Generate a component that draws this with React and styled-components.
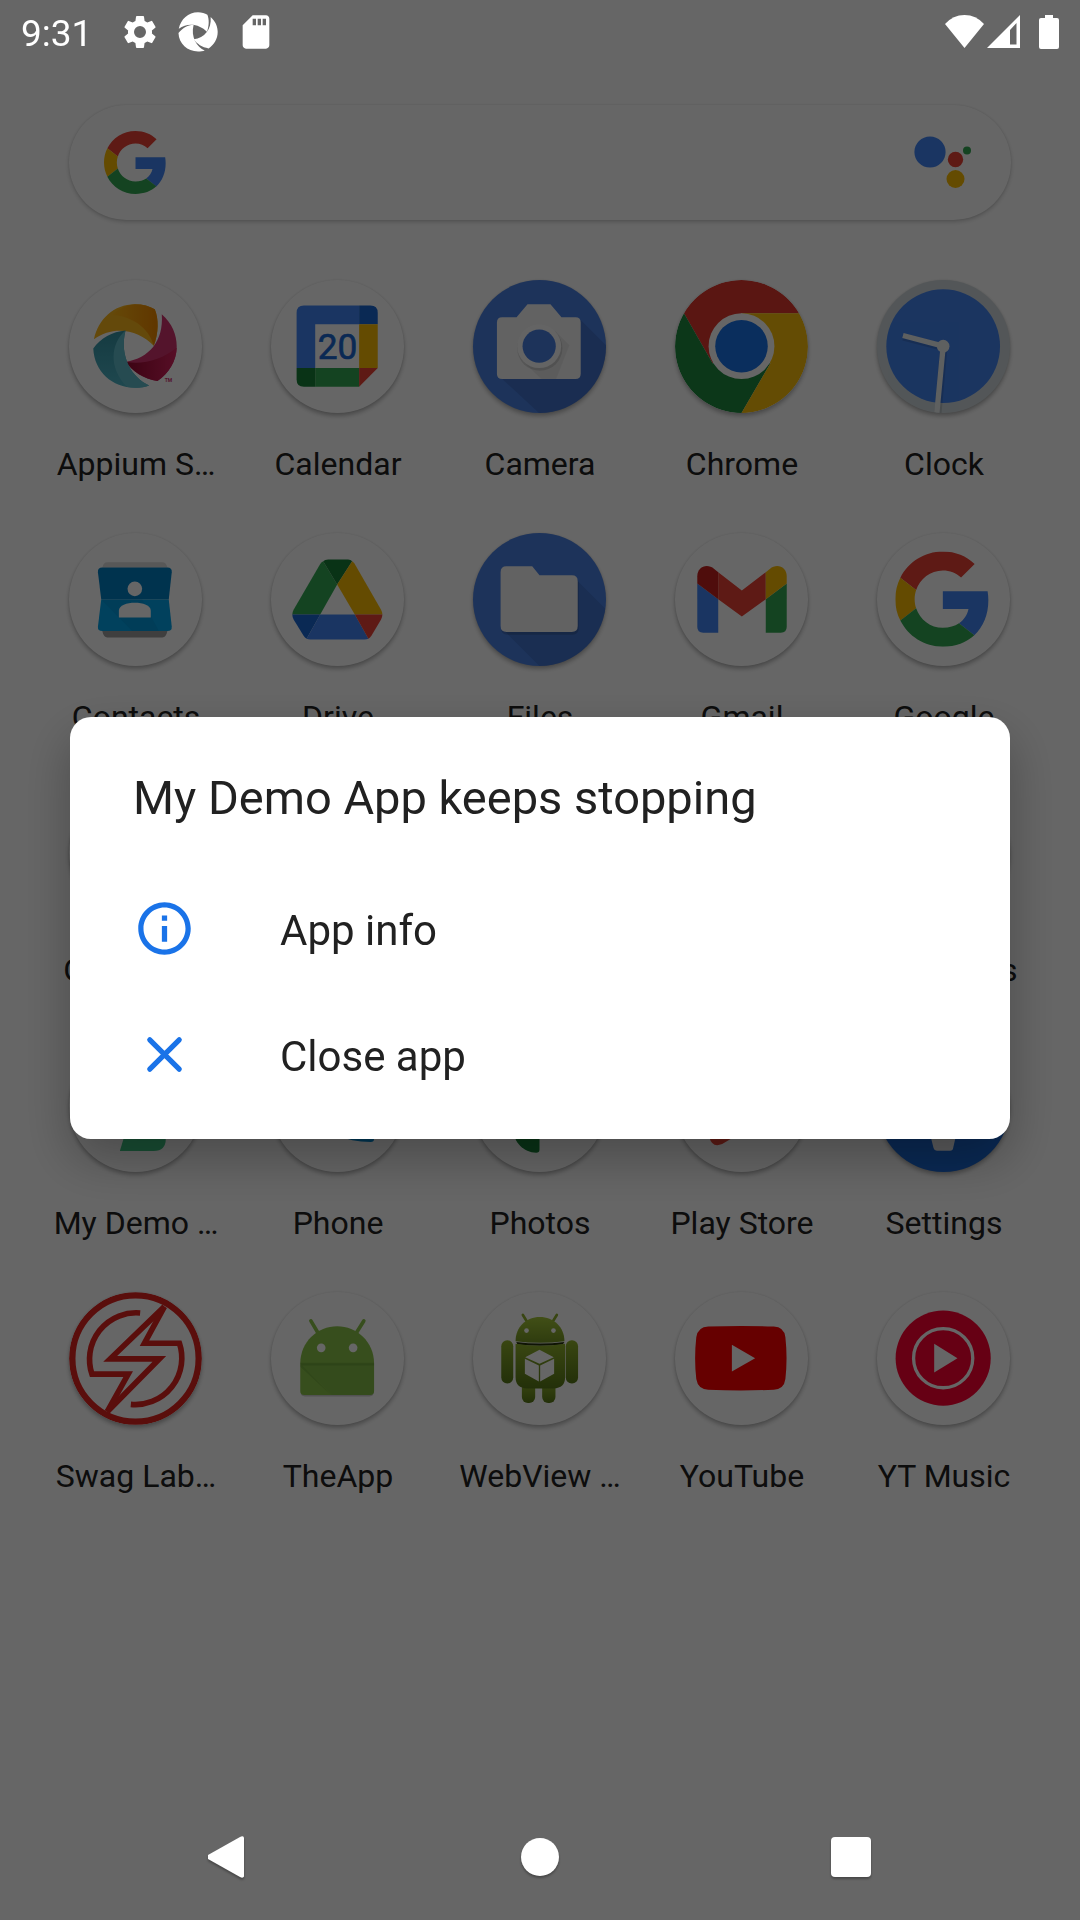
import React from "react";
import styled, { createGlobalStyle } from "styled-components";

const GlobalStyle = createGlobalStyle`
  *, *::before, *::after { box-sizing: border-box; }
  body { margin: 0; background: #fff; color: #212121; font-family: Roboto, "Noto Sans", sans-serif; }
  button { font: inherit; color: inherit; background: none; border: 0; padding: 0; margin: 0; cursor: pointer; }
  svg { display: block; flex: none; }
`;

const Screen = styled.div`
  display: flex;
  flex-direction: column;
  min-height: 100vh;
  background: #fff;
`;

const StatusBar = styled.header`
  position: relative;
  z-index: 2;
  display: flex;
  align-items: center;
  justify-content: space-between;
  height: 63px;
  padding: 0 21px;
  color: #fff;
`;

const StatusGroup = styled.div`
  display: flex;
  align-items: center;
  gap: ${(p) => p.$gap}px;
`;

const Time = styled.time`
  padding: 4px 10px 0 0;
  font-size: 37px;
  line-height: 44px;
`;

const Home = styled.main`
  display: flex;
  flex-direction: column;
  gap: 60px;
  padding: 42px 35px;
`;

const SearchBar = styled.form`
  display: flex;
  align-items: center;
  gap: 24px;
  height: 115px;
  margin: 0 34px;
  padding: 0 40px 0 35px;
  border-radius: 58px;
  background: #fff;
  box-shadow: 0 2px 4px rgba(0, 0, 0, 0.2), 0 0 2px rgba(0, 0, 0, 0.1);
`;

const SearchInput = styled.input`
  flex: 1;
  min-width: 0;
  height: 64px;
  border: 0;
  outline: 0;
  background: transparent;
  font: inherit;
  font-size: 32px;
`;

const AppGrid = styled.ul`
  display: grid;
  grid-template-columns: repeat(5, 1fr);
  row-gap: 49px;
  margin: 0;
  padding: 0;
  list-style: none;
`;

const AppButton = styled.button`
  display: flex;
  flex-direction: column;
  align-items: center;
  gap: 31px;
  width: 100%;
`;

const AppIcon = styled.span`
  width: 133px;
  height: 133px;
  margin-right: 1px;
  overflow: hidden;
  border-radius: 50%;
  background: ${(p) => p.$background || "#fff"};
  box-shadow: 0 3px 4px rgba(0, 0, 0, 0.28), 0 0 2px rgba(0, 0, 0, 0.1);
`;

const AppLabel = styled.span`
  font-size: 32px;
  line-height: 40px;
  white-space: nowrap;
`;

const NavBar = styled.nav`
  position: relative;
  z-index: 2;
  display: grid;
  grid-template-columns: repeat(3, 1fr);
  height: 126px;
  margin-top: auto;
  padding: 0 73px;
`;

const NavButton = styled.button`
  display: flex;
  align-items: center;
  justify-content: center;
  filter: drop-shadow(0 2px 1px rgba(0, 0, 0, 0.3));
`;

const Scrim = styled.div`
  position: fixed;
  inset: 0;
  z-index: 1;
  display: flex;
  align-items: center;
  padding: 63px 70px 127px;
  background: rgba(0, 0, 0, 0.6);
`;

const Dialog = styled.section`
  flex: 1;
  padding-bottom: 22px;
  border-radius: 21px;
  background: #fff;
  box-shadow: 0 20px 50px rgba(0, 0, 0, 0.28);
`;

const DialogTitle = styled.h1`
  margin: 0;
  padding: 53px 63px 39px;
  font-size: 47px;
  font-weight: 400;
  line-height: 56px;
`;

const DialogAction = styled.button`
  display: flex;
  align-items: center;
  gap: 84px;
  width: 100%;
  height: 126px;
  padding: 0 63px;
  font-size: 42px;
  line-height: 50px;
  text-align: left;

  svg { color: #1a73e8; }
`;

const ActionLabel = styled.span`
  padding-top: 6px;
`;

const Art = ({ children }) => (
  <svg viewBox="0 0 400 400" width="133" height="133" aria-hidden="true">{children}</svg>
);

const GoogleLogo = (props) => (
  <svg viewBox="0 0 48 48" aria-hidden="true" {...props}>
    <path fill="#ea4335" d="M24 9.5c3.54 0 6.71 1.22 9.21 3.6l6.85-6.85C35.9 2.38 30.47 0 24 0 14.62 0 6.51 5.38 2.56 13.22l7.98 6.19C12.43 13.72 17.74 9.5 24 9.5z" />
    <path fill="#4285f4" d="M46.98 24.55c0-1.57-.15-3.09-.38-4.55H24v9.02h12.94c-.58 2.96-2.26 5.48-4.78 7.18l7.73 6c4.51-4.18 7.09-10.36 7.09-17.65z" />
    <path fill="#fbbc04" d="M10.53 28.59c-.48-1.45-.76-2.99-.76-4.59s.27-3.14.76-4.59l-7.98-6.19C.92 16.46 0 20.12 0 24c0 3.88.92 7.54 2.56 10.78l7.97-6.19z" />
    <path fill="#34a853" d="M24 48c6.48 0 11.93-2.13 15.89-5.81l-7.73-6c-2.15 1.45-4.92 2.3-8.16 2.3-6.26 0-11.57-4.22-13.47-9.91l-7.98 6.19C6.51 42.62 14.62 48 24 48z" />
  </svg>
);

const apertureTop = "M75 178C88 118 135 73 198 73C222 73 242 79 258 88C270 115 270 160 255 198C210 150 135 135 75 178Z";
const apertureRight = "M279 103C310 130 324 165 324 199C324 243 300 280 266 304C225 298 190 275 171 246C240 235 285 185 279 103Z";
const apertureLeft = "M170 152C130 155 95 175 73 206C76 275 130 324 198 324C214 324 230 321 241 317C190 295 150 230 170 152Z";

const Appium = () => (
  <Art>
    <defs>
      <linearGradient id="apOrange"><stop offset="0" stopColor="#fdb515" /><stop offset="1" stopColor="#f08800" /></linearGradient>
      <linearGradient id="apRed"><stop offset="0" stopColor="#96082f" /><stop offset="1" stopColor="#d92460" /></linearGradient>
      <linearGradient id="apTeal" x1="0" y1="0" x2="0" y2="1"><stop offset="0" stopColor="#3593a3" /><stop offset="1" stopColor="#4fb4c6" /></linearGradient>
    </defs>
    <path fill="#fbb61c" d={apertureTop} />
    <path fill="url(#apOrange)" d="M130 105C185 108 240 140 255 198C270 160 270 115 258 88C242 79 222 73 198 73C170 75 145 90 130 105Z" />
    <path fill="#d2346f" d={apertureRight} />
    <path fill="url(#apRed)" d="M171 246C220 256 280 240 324 203C323 245 300 280 266 304C225 298 190 275 171 246Z" />
    <path fill="url(#apTeal)" d={apertureLeft} />
    <path fill="#60bccb" d="M170 152C125 190 118 265 175 322C205 326 225 323 241 317C190 295 150 230 170 152Z" />
    <text x="288" y="307" fontFamily="Roboto" fontSize="15" fontWeight="700" fill="#d2346f">TM</text>
  </Art>
);

const Calendar = () => (
  <Art>
    <path fill="#4285f4" d="M99 77H265V133H133V265H77V99Q77 77 99 77Z" />
    <path fill="#1967d2" d="M265 77H299Q321 77 321 99V133H265Z" />
    <path fill="#fbbc04" d="M265 133H321V265H265Z" />
    <path fill="#34a853" d="M133 265H265V321H133Z" />
    <path fill="#188038" d="M77 265H133V321H99Q77 321 77 299Z" />
    <path fill="#ea4335" d="M265 265H321L265 321Z" />
    <text x="200" y="238" textAnchor="middle" fontFamily="Roboto" fontSize="106" fontWeight="400" fill="#1967d2" stroke="#1967d2" strokeWidth="2">20</text>
  </Art>
);

const Camera = () => (
  <Art>
    <path fill="#2a4b8d" opacity=".28" d="M324 120L420 216V420H220L84 294Z" />
    <path fill="#f4f4f4" d="M88 112H131L164 73H233L266 112H308Q324 112 324 128V282Q324 298 308 298H88Q72 298 72 282V128Q72 112 88 112Z" />
    <path fill="#000" opacity=".05" d="M246 152L290 196L250 298H205L152 246Z" />
    <circle cx="201" cy="205" r="68" fill="#000" opacity=".12" />
    <circle cx="199" cy="199" r="66" fill="#fafafa" />
    <circle cx="199" cy="199" r="50" fill="#4a80e2" />
  </Art>
);

const Chrome = () => (
  <Art>
    <path fill="#e0392d" d="M27 100A200 200 0 0 1 373 100H200L113 250Z" />
    <path fill="#208a40" d="M27 100L113 250H287L200 400A200 200 0 0 1 27 100Z" />
    <path fill="#fbbf0c" d="M373 100A200 200 0 0 1 200 400L287 250L200 100Z" />
    <circle cx="200" cy="199" r="99" fill="#fff" />
    <circle cx="200" cy="199" r="79" fill="#1a73e8" />
  </Art>
);

const Clock = () => (
  <Art>
    <circle cx="199" cy="199" r="171" fill="#4484f0" />
    <path stroke="#000" opacity=".12" strokeWidth="22" d="M201 203L79 171M201 203L183 402" />
    <path stroke="#eceff1" strokeWidth="16" d="M199 199L78 167M199 199L180 400" />
    <circle cx="199" cy="199" r="19" fill="#eceff1" />
  </Art>
);

const Contacts = () => (
  <Art>
    <path fill="#dcdcdc" d="M115 88H281Q292 88 296 104H100Q104 88 115 88Z" />
    <path fill="#9d9d9d" d="M100 294H296Q292 314 281 314H115Q104 314 100 294Z" />
    <path fill="#027fc4" d="M100 104H296Q310 104 309 118L300 200H97L87 118Q86 104 100 104Z" />
    <path fill="#03a4e8" d="M97 200H300L309 281Q310 295 296 295H100Q86 295 87 281Z" />
    <path fill="#0277bd" opacity=".25" d="M97 200L190 295H270L220 200Z" />
    <circle cx="198" cy="168" r="22" fill="#fff" />
    <path fill="#fff" d="M150 254V234C150 218 174 210 198 210S246 218 246 234V254Z" />
  </Art>
);

const Drive = () => (
  <Art>
    <path fill="#34a853" d="M157 85L199 155L148 245H64Q64 239 68 231L148 93Q151 88 157 85Z" />
    <path fill="#188038" d="M157 85Q162 80 172 80H232Q240 80 244 85L199 155Z" />
    <path fill="#fbbc04" d="M244 85Q248 87 251 92L331 231Q335 238 335 245H252L199 155Z" />
    <path fill="#1967d2" d="M64 245H148L107 318Q102 315 98 309L68 260Q64 252 64 245Z" />
    <path fill="#4285f4" d="M148 245H252L293 318Q288 320 281 320H118Q112 320 107 318Z" />
    <path fill="#ea4335" d="M252 245H335Q335 252 331 260L302 309Q298 315 293 318Z" />
  </Art>
);

const Files = () => (
  <Art>
    <path fill="#2a4b8d" opacity=".25" d="M315 145L420 250V420H220L92 292Z" />
    <rect x="84" y="132" width="234" height="174" rx="18" fill="#000" opacity=".15" />
    <path fill="#f4f4f4" d="M101 100H178L200 127H297Q315 127 315 145V280Q315 298 297 298H101Q83 298 83 280V118Q83 100 101 100Z" />
  </Art>
);

const Gmail = () => (
  <Art>
    <path fill="#4285f4" d="M67 152L130 199V300H85Q67 300 67 282Z" />
    <path fill="#34a853" d="M336 152L273 199V300H318Q336 300 336 282Z" />
    <path fill="#c5221f" d="M67 152V130C67 102 96 90 118 108L130 118V199Z" />
    <path fill="#ea4335" d="M130 118L201 173L273 118V199L201 251L130 199Z" />
    <path fill="#fbbc04" d="M273 118L285 108C307 90 336 102 336 130V152L273 199Z" />
  </Art>
);

const Google = () => (
  <Art><GoogleLogo x="55" y="56" width="286" height="286" /></Art>
);

const MyDemo = () => (
  <Art><path fill="#3fc684" d="M176 260L153 337H255Q291 337 291 300V260Z" /></Art>
);

const Phone = () => (
  <Art><path fill="#0288d1" d="M200 280V290Q240 308 300 310Q310 310 310 300V280Z" /></Art>
);

const Photos = () => (
  <Art><path fill="#188038" d="M120 270C122 310 152 342 190 342Q200 342 200 332V270Z" /></Art>
);

const PlayStore = () => (
  <Art><path fill="#ea4335" d="M104 290V298Q112 328 142 316L180 293V285Z" /></Art>
);

const Settings = () => (
  <Art><path fill="#e8eaed" d="M158 280L170 328Q172 336 180 336H220Q228 336 229 328L240 280Z" /></Art>
);

const SwagLabs = () => (
  <Art>
    <g fill="none" stroke="#e2231f">
      <circle cx="200" cy="200" r="190" strokeWidth="19" />
      <g strokeWidth="17" strokeMiterlimit="10">
        <path d="M287 44L124 201H272L115 360" />
        <path d="M287 44L227 154H332A140 140 0 0 1 186 338" />
        <path d="M115 360L178 247H69A140 140 0 0 1 214 63" />
      </g>
    </g>
  </Art>
);

const TheApp = () => (
  <Art>
    <path fill="#000" opacity=".2" d="M90 300H308V304Q308 314 296 314H102Q90 314 90 304Z" />
    <path fill="none" stroke="#8bc34a" strokeWidth="11" strokeLinecap="round" d="M120 87L142 124M279 87L256 124" />
    <path fill="#8bc34a" d="M88 215C88 150 140 103 199 103C258 103 310 150 310 215V298Q310 310 298 310H100Q88 310 88 298Z" />
    <path fill="#558b2f" opacity=".15" d="M88 215L183 310H298Q310 310 310 298V215Z" />
    <path fill="#33691e" opacity=".2" d="M88 213H310V221H94L180 310L88 225Z" />
    <circle cx="151" cy="168" r="13" fill="#fff" />
    <circle cx="247" cy="168" r="13" fill="#fff" />
  </Art>
);

const WebView = () => (
  <Art>
    <defs>
      <linearGradient id="wvHead" x1="0" y1="0" x2="0" y2="1"><stop offset="0" stopColor="#a4c639" /><stop offset="1" stopColor="#769625" /></linearGradient>
      <linearGradient id="wvBody" x1="0" y1="0" x2="0" y2="1"><stop offset="0" stopColor="#8fb02c" /><stop offset="1" stopColor="#587818" /></linearGradient>
    </defs>
    <path stroke="#8fae30" strokeWidth="8" strokeLinecap="round" d="M150 69L163 90M252 69L239 90" />
    <path fill="url(#wvHead)" d="M128 148C128 105 160 75 201 75S275 105 275 148Q201 158 128 148Z" />
    <path fill="#26330a" d="M130 150Q201 160 275 150L270 158Q201 166 134 158Z" />
    <g fill="url(#wvBody)">
      <rect x="147" y="270" width="40" height="64" rx="18" />
      <rect x="208" y="270" width="40" height="64" rx="18" />
      <rect x="85" y="145" width="36" height="130" rx="18" />
      <rect x="279" y="145" width="37" height="130" rx="18" />
      <path d="M128 156Q201 168 277 156V256Q277 290 242 290H163Q128 290 128 256Z" />
    </g>
    <circle cx="161" cy="116" r="7" fill="#fff" />
    <circle cx="242" cy="116" r="7" fill="#fff" />
    <path fill="#fff" d="M200 174L243 196L200 216L157 196ZM156 201L198 221V269L156 246ZM244 201L202 221V269L244 246Z" />
  </Art>
);

const YouTube = () => (
  <Art>
    <path fill="#f00" d="M100 104Q198 100 297 104Q328 105 332 136Q339 199 332 262Q328 293 297 294Q198 298 100 294Q69 293 64 262Q57 199 64 136Q69 105 100 104Z" />
    <path fill="#fff" d="M171 159L241 199L171 239Z" />
  </Art>
);

const YTMusic = () => (
  <Art>
    <circle cx="199" cy="199" r="143" fill="#f03" />
    <circle cx="199" cy="199" r="89" fill="none" stroke="#fff" strokeWidth="10" />
    <path fill="#fff" d="M172 156L242 199L172 242Z" />
  </Art>
);

const apps = [
  { name: "Appium S…", Icon: Appium },
  { name: "Calendar", Icon: Calendar },
  { name: "Camera", Icon: Camera, background: "#4a80e2" },
  { name: "Chrome", Icon: Chrome },
  { name: "Clock", Icon: Clock, background: "#cfd8dc" },
  { name: "Contacts", Icon: Contacts },
  { name: "Drive", Icon: Drive },
  { name: "Files", Icon: Files, background: "#4a80e2" },
  { name: "Gmail", Icon: Gmail },
  { name: "Google", Icon: Google },
  { name: "Google P…", Icon: Google },
  { name: "", Icon: Art },
  { name: "", Icon: Art },
  { name: "", Icon: Art },
  { name: "Messages", Icon: Art },
  { name: "My Demo …", Icon: MyDemo },
  { name: "Phone", Icon: Phone },
  { name: "Photos", Icon: Photos },
  { name: "Play Store", Icon: PlayStore },
  { name: "Settings", Icon: Settings, background: "#1967d2" },
  { name: "Swag Lab…", Icon: SwagLabs },
  { name: "TheApp", Icon: TheApp },
  { name: "WebView …", Icon: WebView },
  { name: "YouTube", Icon: YouTube },
  { name: "YT Music", Icon: YTMusic },
];

const GearIcon = () => (
  <svg viewBox="0 0 24 24" width="40" height="40" fill="currentColor" aria-hidden="true">
    <path d="M19.14 12.94c.04-.3.06-.61.06-.94 0-.32-.02-.64-.07-.94l2.03-1.58a.49.49 0 0 0 .12-.61l-1.92-3.32a.49.49 0 0 0-.59-.22l-2.39.96c-.5-.38-1.03-.7-1.62-.94l-.36-2.54a.48.48 0 0 0-.48-.41h-3.84c-.24 0-.43.17-.47.41l-.36 2.54c-.59.24-1.13.57-1.62.94l-2.39-.96a.48.48 0 0 0-.59.22L2.74 8.87c-.12.21-.08.47.12.61l2.03 1.58c-.05.3-.09.63-.09.94s.02.64.07.94l-2.03 1.58a.49.49 0 0 0-.12.61l1.92 3.32c.12.22.37.29.59.22l2.39-.96c.5.38 1.03.7 1.62.94l.36 2.54c.05.24.24.41.48.41h3.84c.24 0 .44-.17.47-.41l.36-2.54c.59-.24 1.13-.56 1.62-.94l2.39.96c.22.08.47 0 .59-.22l1.92-3.32a.49.49 0 0 0-.12-.61l-2.01-1.58zM12 15.6a3.6 3.6 0 1 1 0-7.2 3.6 3.6 0 0 1 0 7.2z" />
  </svg>
);

const ApertureIcon = () => (
  <svg viewBox="70 71 256 256" width="40" height="40" fill="currentColor" aria-hidden="true">
    <path d={apertureTop} />
    <path d={apertureRight} />
    <path d={apertureLeft} />
  </svg>
);

const SdCardIcon = () => (
  <svg viewBox="0 0 24 24" width="40" height="40" fill="currentColor" aria-hidden="true">
    <path d="M18 2h-8L4 8v12c0 1.100.9 2 2 2h12c1.100 0 2-.9 2-2V4c0-1.100-.9-2-2-2zm-6 6h-2V4h2v4zm3 0h-2V4h2v4zm3 0h-2V4h2v4z" />
  </svg>
);

const App = () => (
  <>
    <GlobalStyle />
    <Screen>
      <StatusBar>
        <StatusGroup $gap={18}>
          <Time>9:31</Time>
          <GearIcon />
          <ApertureIcon />
          <SdCardIcon />
        </StatusGroup>
        <StatusGroup $gap={19}>
          <StatusGroup $gap={3}>
            <svg width="39" height="33" viewBox="0 0 39 33" fill="currentColor" aria-hidden="true">
              <path d="M0 9Q8 0 19.500 0T39 9L19.500 33Z" />
            </svg>
            <svg width="33" height="33" viewBox="0 0 33 33" fill="currentColor" aria-hidden="true">
              <path fillRule="evenodd" d="M33 0V33H0ZM29.500 8L23 15V29.500H29.500Z" />
            </svg>
          </StatusGroup>
          <svg width="20" height="34" viewBox="0 0 20 34" fill="currentColor" aria-hidden="true">
            <path d="M6 0H14V3H18Q20 3 20 5V32Q20 34 18 34H2Q0 34 0 32V5Q0 3 2 3H6Z" />
          </svg>
        </StatusGroup>
      </StatusBar>

      <Home>
        <SearchBar role="search">
          <GoogleLogo width="63" height="63" />
          <SearchInput type="text" aria-label="Search" />
          <button type="button" aria-label="Assistant">
            <svg width="57" height="54" viewBox="0 0 57 54" aria-hidden="true">
              <circle cx="16" cy="16" r="15.600" fill="#4285f4" />
              <circle cx="41.500" cy="23.500" r="7.700" fill="#ea4335" />
              <circle cx="53" cy="14.500" r="4" fill="#34a853" />
              <circle cx="41.500" cy="43" r="9" fill="#fbbc04" />
            </svg>
          </button>
        </SearchBar>

        <AppGrid>
          {apps.map(({ name, Icon, background }, index) => (
            <li key={index}>
              <AppButton type="button">
                <AppIcon $background={background}><Icon /></AppIcon>
                {name && <AppLabel>{name}</AppLabel>}
              </AppButton>
            </li>
          ))}
        </AppGrid>
      </Home>

      <NavBar aria-label="System">
        <NavButton type="button" aria-label="Back">
          <svg width="42" height="42" viewBox="0 0 42 42" fill="#fff" aria-hidden="true">
            <path d="M36 1.500V40.500Q35 42.500 32 41L0 23Q-1.500 21 0 19L32 1Q35 -.5 36 1.500Z" />
          </svg>
        </NavButton>
        <NavButton type="button" aria-label="Home">
          <svg width="40" height="40" viewBox="0 0 40 40" aria-hidden="true"><circle cx="20" cy="20" r="19" fill="#fff" /></svg>
        </NavButton>
        <NavButton type="button" aria-label="Recent apps">
          <svg width="40" height="40" viewBox="0 0 40 40" aria-hidden="true"><rect width="40" height="40" rx="4" fill="#fff" /></svg>
        </NavButton>
      </NavBar>
    </Screen>

    <Scrim>
      <Dialog role="alertdialog" aria-labelledby="crash-title">
        <DialogTitle id="crash-title">My Demo App keeps stopping</DialogTitle>
        <DialogAction type="button">
          <svg width="63" height="63" viewBox="0 0 24 24" fill="currentColor" aria-hidden="true">
            <path d="M11 7h2v2h-2zm0 4h2v6h-2zm1-9C6.480 2 2 6.480 2 12s4.480 10 10 10 10-4.480 10-10S17.520 2 12 2zm0 18c-4.410 0-8-3.590-8-8s3.590-8 8-8 8 3.590 8 8-3.590 8-8 8z" />
          </svg>
          <ActionLabel>App info</ActionLabel>
        </DialogAction>
        <DialogAction type="button">
          <svg width="63" height="63" viewBox="0 0 24 24" fill="none" stroke="currentColor" strokeWidth="2" strokeLinecap="round" aria-hidden="true">
            <path d="M6.400 6.400L17.600 17.600M17.600 6.400L6.400 17.600" />
          </svg>
          <ActionLabel>Close app</ActionLabel>
        </DialogAction>
      </Dialog>
    </Scrim>
  </>
);

export default App;
